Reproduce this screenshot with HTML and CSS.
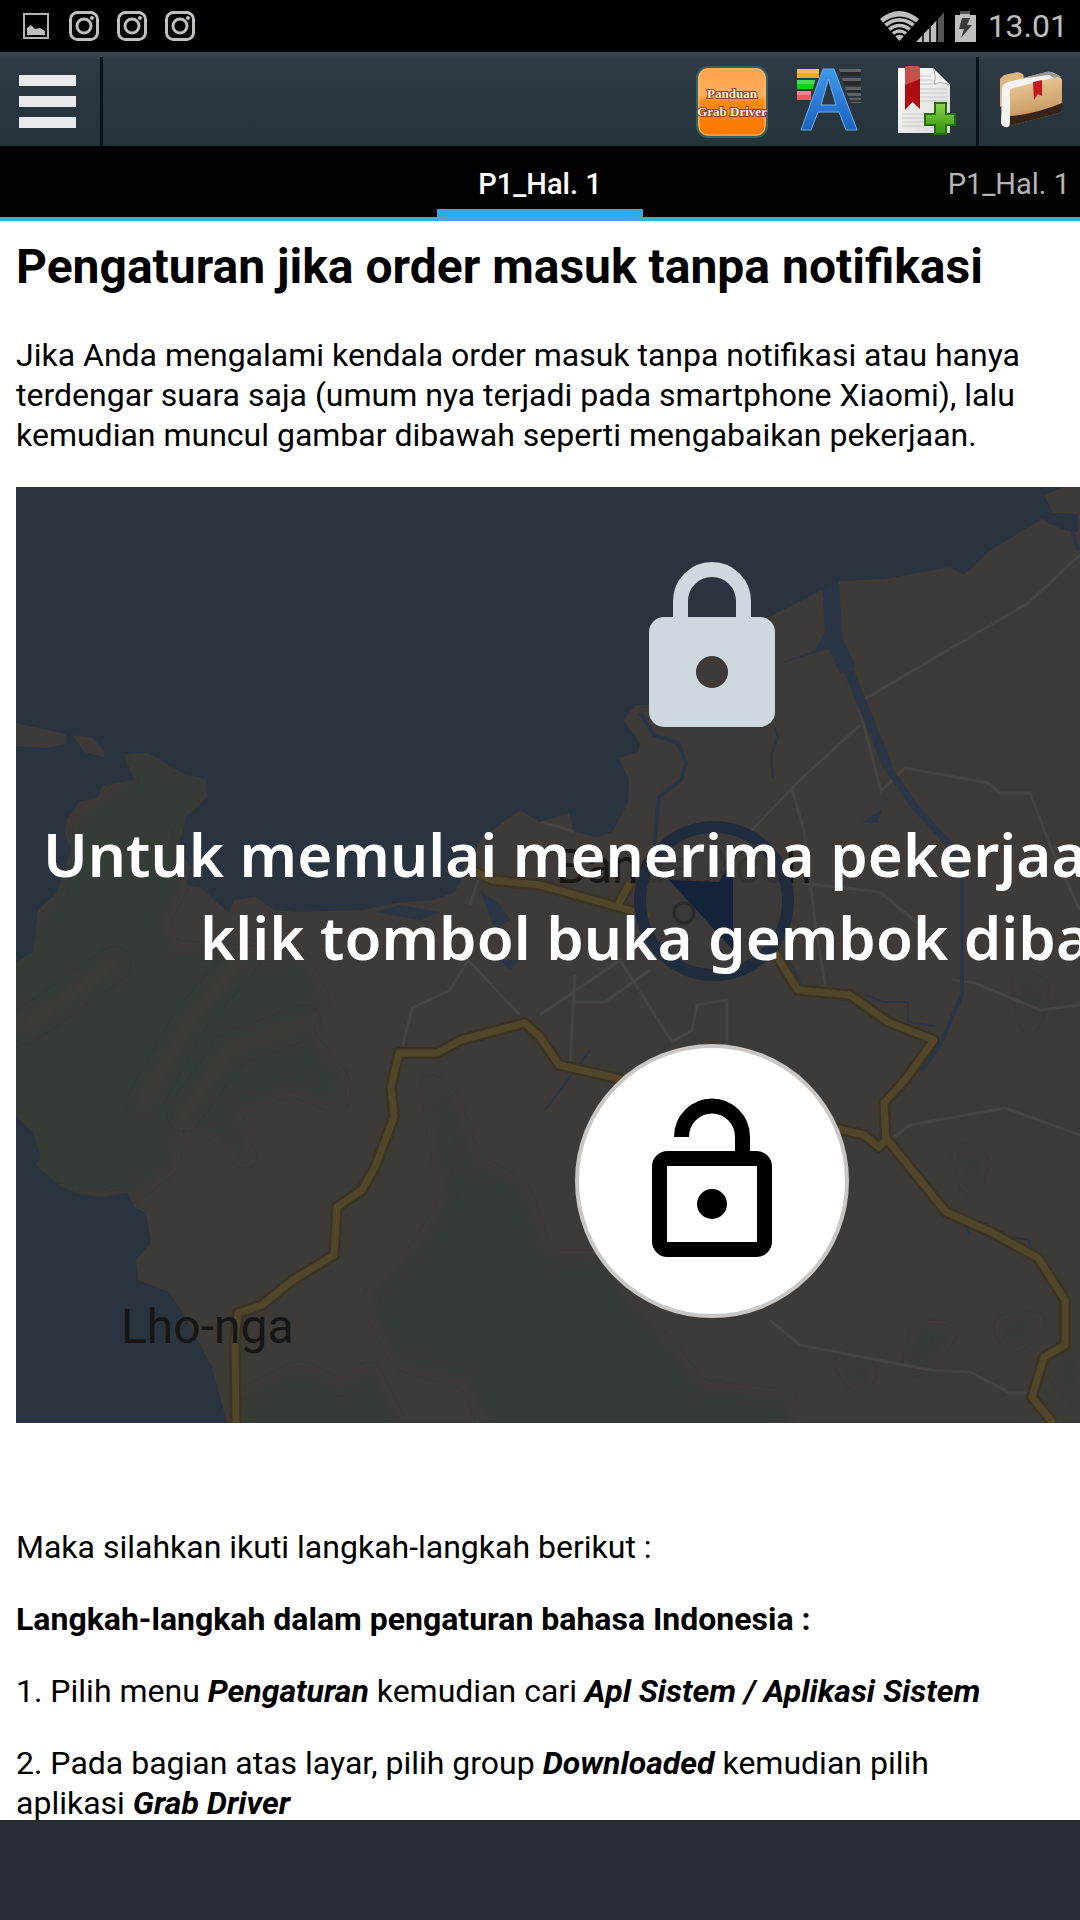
FILE: index.html
```html
<!DOCTYPE html>
<html lang="id">
<head>
<meta charset="utf-8">
<meta name="viewport" content="width=device-width, initial-scale=1">
<title>Panduan Grab Driver</title>
<link rel="stylesheet" href="styles.css">
</head>
<body>
<div class="app">
  <div class="status">
    <div class="status-left">
      <svg width="26" height="26" viewBox="0 0 26 26" aria-hidden="true"><rect x="1" y="1" width="24" height="24" fill="none" stroke="#b4b4b0" stroke-width="2"/><path d="M4 22V15L8 12L12 16L17 15L22 18V22Z" fill="#bebebe"/></svg>
      <svg class="insta" width="30" height="30" viewBox="0 0 30 30" aria-hidden="true"><use href="#insta"/></svg>
      <svg class="insta" width="30" height="30" viewBox="0 0 30 30" aria-hidden="true"><use href="#insta"/></svg>
      <svg class="insta" width="30" height="30" viewBox="0 0 30 30" aria-hidden="true">
        <g id="insta"><rect x="1.500" y="1.500" width="27" height="27" rx="7" fill="none" stroke="#c2c0bd" stroke-width="3"/><circle cx="15" cy="15" r="7" fill="none" stroke="#c2c0bd" stroke-width="3"/><circle cx="23" cy="7" r="2" fill="#c2c0bd"/></g>
      </svg>
    </div>
    <div class="status-right">
      <svg width="96" height="32" viewBox="0 0 96 32" aria-hidden="true">
        <path d="M0 9Q19 -7 39 9L19.500 31Z" fill="#bebebe"/>
        <path d="M3 13.500Q19.500 1 36 13.500M6.500 18Q19.500 7.500 32.500 18M10.500 22Q19.500 14.500 28.500 22M14 26Q19.500 21.500 25 26" fill="none" stroke="#000" stroke-width="1.700"/>
        <path d="M36 32L57 10V32Z" fill="#bebebe"/><path d="M58 9L64 2V32H58Z" fill="#555"/>
        <path d="M43 22V32M50 15V32M57 8V32" stroke="#000" stroke-width="1.500"/>
        <path d="M80 1H90V5H96V32H75V5H80Z" fill="#bebebe"/><path d="M80 1H90V4H80Z" fill="#555"/>
        <path d="M82 8H90L87 15H92L81 28L84 19H79Z" fill="#3a3a3a"/>
      </svg>
      <time>13.01</time>
    </div>
  </div>

  <header class="toolbar">
    <button class="tool tool-menu" type="button" aria-label="Menu"><span class="bar"></span><span class="bar"></span><span class="bar"></span></button>
    <div class="tools">
      <button class="tool" type="button" aria-label="Panduan Grab Driver">
        <svg width="72" height="72" viewBox="0 0 72 72">
          <defs><linearGradient id="og" x2="0" y2="1"><stop offset="0" stop-color="#ffa24c"/><stop offset=".4" stop-color="#ffad5c"/><stop offset=".5" stop-color="#ff8a10"/><stop offset="1" stop-color="#fb7600"/></linearGradient></defs>
          <rect x="1" y="1" width="70" height="70" rx="11" fill="url(#og)" stroke="#2f6468" stroke-width="2"/>
          <rect x="3" y="3" width="66" height="66" rx="9" fill="none" stroke="#ffb877"/>
          <g class="logo-text"><text x="36" y="32">Panduan</text><text x="36" y="50">Grab Driver</text></g>
        </svg>
      </button>
      <button class="tool" type="button" aria-label="Huruf dan warna">
        <svg width="72" height="72" viewBox="0 0 72 72">
          <defs><linearGradient id="bl" x2="0" y2="1"><stop offset="0" stop-color="#3f97ec"/><stop offset="1" stop-color="#1c60bd"/></linearGradient></defs>
          <path d="M4 3H26V12H4Z" fill="#f1a91f"/><path d="M4 14H22L20 23H4Z" fill="#0bd51d"/><path d="M4 25H18V34H4Z" fill="#f4575d"/>
          <path d="M4 3H26V7H4ZM4 14H22V18H4ZM4 25H18V29H4Z" fill="#fff" opacity=".25"/>
          <path d="M46 3H68V9H48ZM49 12H68V18H51ZM52 21H68V25H53ZM54 27H68V30H55ZM56 32H68V34H57ZM58 36H68V37H59Z" fill="#606366"/>
          <path d="M47 6H68V10H48ZM50 15H68V19H51ZM53 24H68V26H54Z" fill="#26292c"/>
          <path fill-rule="evenodd" d="M30 3H41L64 64H53L46 46H25L18 64H8ZM35.500 13L28 39H43Z" fill="url(#bl)" stroke="#69b2f2"/>
        </svg>
      </button>
      <button class="tool" type="button" aria-label="Tambah penanda">
        <svg width="72" height="72" viewBox="0 0 72 72">
          <defs><linearGradient id="pg" x2="1" y2="1"><stop offset="0" stop-color="#fff"/><stop offset="1" stop-color="#d8d8d6"/></linearGradient><linearGradient id="gr" x2="0" y2="1"><stop offset="0" stop-color="#8bd44c"/><stop offset="1" stop-color="#32900b"/></linearGradient></defs>
          <path d="M8 2H43L60 19V67H8Z" fill="url(#pg)"/>
          <path d="M30 10H41M30 14H42M30 18H46M30 23H57M30 27H57M30 31H57M30 35H57M12 48H38M12 52H36M12 56H36M12 60H38" stroke="#c6c6c6"/>
          <path d="M43 2L60 19Q51 15 44 18Q47 11 43 2Z" fill="#f4f4f4" stroke="#aaa"/>
          <path d="M15 2Q15 0 18 0H27Q30 0 30 2V43L22.500 36L15 44Z" fill="#ad0d12"/><path d="M15 2Q15 0 18 0H27Q30 0 30 2V13L15 19Z" fill="#c8504b"/>
          <path d="M45 37H56V48H65V59H56V68H45V59H35V48H45Z" fill="url(#gr)" stroke="#237006" stroke-width="2"/>
        </svg>
      </button>
    </div>
    <button class="tool tool-last" type="button" aria-label="Daftar penanda">
      <svg width="72" height="72" viewBox="0 0 72 72">
        <defs><linearGradient id="fo" x1="0" x2=".2" y2="1"><stop offset="0" stop-color="#f0cf9e"/><stop offset=".7" stop-color="#cfa26a"/><stop offset="1" stop-color="#a57b4b"/></linearGradient></defs>
        <path d="M9 13L13 9L27 6L32 8L33 12L18 54L9 44Z" fill="#dcb580"/><path d="M9 41L18 38V58L10 52Z" fill="#2c1c13"/>
        <path d="M11 22Q11 18 17 16L56 6Q61 5 70 11L20 25L19 58Q18 62 14 61Q10 60 10 56Z" fill="#f5f3ef"/>
        <path d="M28 13L55 6Q60 5 70 11L65 13L58 9Z" fill="#9a9894"/>
        <path d="M19 26Q19 23 22 22L66 11Q71 11 71 15V44Q71 46 68 47L22 59Q18 62 19 56Z" fill="url(#fo)"/>
        <path d="M19 50Q45 48 71 37V44Q71 46 68 47L22 59Q18 62 19 56Z" fill="#38251a"/>
        <path d="M42 16L51 14V30L47 28L43 34Z" fill="#c3191d"/>
      </svg>
    </button>
  </header>

  <nav class="tabs">
    <a class="tab tab-current" href="#hal1" aria-current="page">P1_Hal. 1</a>
    <a class="tab tab-next" href="#hal2">P1_Hal. 1</a>
  </nav>

  <main class="page" id="hal1">
    <h1>Pengaturan jika order masuk tanpa notifikasi</h1>
    <p>Jika Anda mengalami kendala order masuk tanpa notifikasi atau hanya terdengar suara saja (umum nya terjadi pada smartphone Xiaomi), lalu kemudian muncul gambar dibawah seperti mengabaikan pekerjaan.</p>
    <figure class="shot">
      <svg width="1392" height="936" viewBox="16 487 1392 936" role="img" aria-label="Tampilan peta terkunci dengan tombol buka gembok">
        <defs>
          <path id="land" d="M1408 487H1063L1044 495L1053 513L1078 514V532L1068 531L1060 525L1050 525L1043 518L988 552L964 575L950 567L884 579L839 581L822 590L769 617L649 705L636 705L623 720L640 743L638 752L619 758L629 780L628 803L612 832L597 837L574 832L569 813L540 822L520 810L482 838L465 865L461 880L455 892L434 900L396 903L362 910L296 912L275 910L255 897L234 900L229 913L200 887L186 885L191 867L178 850L186 817L207 797L206 780L182 773L148 753L124 754L134 780L103 785L98 797L79 802L67 820L65 833L71 850L57 893L38 910L33 953L16 962V1115L33 1132L41 1157L36 1165L62 1187L80 1194L103 1197L128 1193L134 1207L146 1213L151 1243L136 1260L138 1280L169 1292L183 1313L212 1367L227 1423H1408Z"/>
          <path id="road" d="M236 1423L235 1340L238 1313L262 1305L293 1280L334 1255L337 1207L362 1190L375 1167L394 1117L391 1087L399 1053H437L461 1040L525 1023L540 1037L559 1065L616 1078L843 1130L864 1135L879 1147L886 1140L884 1103L905 1080L934 1040L888 1022L850 995L798 990L784 968L770 945M472 870L492 880L540 885L650 916M617 907L630 883M886 1138L946 1212L991 1232L1038 1258L1065 1300V1345L1044 1357L1032 1397L1053 1423"/>
          <clipPath id="onland"><use href="#land"/></clipPath>
          <filter id="soft" x="-10%" y="-10%" width="120%" height="120%"><feGaussianBlur stdDeviation="6"/></filter>
        </defs>
        <rect x="16" y="487" width="1392" height="936" fill="#2a3440"/>
        <use href="#land" fill="#3d3a37"/>
        <path d="M16 723L66 734V744L45 748L16 746ZM73 735L92 738L104 750V757L84 752Z" fill="#3d3a38"/>
        <g clip-path="url(#onland)">
          <g filter="url(#soft)" fill="#363a34">
            <path d="M115 745L220 780L180 830L182 880L160 920L170 950L300 960L320 1000L300 1030L340 1080L340 1105L290 1085L230 1110L250 1165L215 1130L175 1115L170 1165L130 1195L30 1190L10 1100V960L60 900L65 830L134 780Z"/>
            <path d="M430 1080L450 1100L470 1160L520 1190L535 1230L545 1260L600 1260L630 1310L660 1340L700 1390L790 1400L780 1430H490L470 1380L400 1360L370 1300L420 1250L450 1200L440 1150Z"/>
            <path d="M240 1400L300 1370L340 1390L370 1370L400 1430H250ZM920 1330L950 1330L930 1360L910 1370ZM1000 1325L1040 1320L1015 1345ZM840 1360L870 1370L860 1385ZM960 1150L980 1160L970 1190ZM1020 980L1040 985L1030 1030ZM1055 1370L1080 1350V1400Z"/>
          </g>
          <g filter="url(#soft)" fill="none" stroke="#3d3b36" stroke-width="14"><path d="M250 950L190 1020L140 1110M310 1020L230 1050L180 1120M120 960L20 1030"/></g>
          <g fill="none" stroke="#464443" stroke-width="3">
            <path d="M1080 555L1028 603L858 703L881 791L905 768L988 783L1000 793H1030L1052 850L1080 910M860 725L800 780L750 832M792 790L804 830L816 930L826 990M802 883L880 892L920 925M540 1015L620 960L672 1042L692 1030L697 1005L727 1000V1045M575 975L570 1065M575 1002H605L650 970M470 905L478 880M403 1045L412 1008L450 990L468 960L520 1015M893 1138L910 1125L1005 1108L1080 1135M952 980L975 983L1040 1010L1080 1005M770 1320L800 1345L930 1370L970 1372L1010 1393H1028M540 822L560 827L575 832"/>
          </g>
          <g fill="none" stroke="#2a3645" stroke-linejoin="round">
            <path stroke-width="17" d="M830 575L834 640L848 670"/>
            <path stroke-width="10" d="M842 655L862 703L888 767"/>
            <path stroke-width="7" d="M886 765L915 807L950 845L959 865"/>
            <path stroke-width="4" d="M962 865V995L940 1045L922 1070M640 713L654 735L678 743L686 763L681 780L659 797L655 837V860M1043 518L1060 526L1072 530L1078 550"/>
            <path stroke-width="2" d="M775 727L778 738L771 755L773 778M898 1150L930 1195L960 1215L970 1235M1000 1235L1028 1240L1040 1265M590 1050L545 1110M785 955L803 985M865 995L885 1002H908V1022L935 1026"/>
          </g>
          <path d="M778 664L815 650L826 630L842 645ZM862 822L882 810L877 823ZM375 912L400 905L440 912L420 920ZM480 890L500 905L510 920L495 930ZM498 960L520 960L510 970Z" fill="#2a3645"/>
          <g fill="none" stroke-linejoin="round">
            <use href="#road" stroke="#3b3424" stroke-width="12"/>
            <use href="#road" stroke="#51452a" stroke-width="7"/>
          </g>
        </g>
        <g class="map-label"><text x="556" y="883">Banda Aceh</text><text x="121" y="1343">Lho-nga</text></g>
        <circle cx="714" cy="901" r="74" fill="#3c3b39" fill-opacity=".8" stroke="#202c3d" stroke-width="12"/>
        <circle cx="684" cy="913" r="10" fill="none" stroke="#2b2a29" stroke-width="3"/>
        <path d="M669 880L719 882L733 858V950Z" fill="#14233b"/>
        <path d="M680.500 620V601A31.500 31.500 0 0 1 743.500 601V620" fill="none" stroke="#cdd8df" stroke-width="15"/>
        <rect x="649" y="617" width="126" height="110" rx="15" fill="#cdd8df"/>
        <circle cx="712" cy="672" r="16" fill="#3d3a37"/>
        <g class="shot-text"><text x="43" y="877">Untuk memulai menerima pekerjaan,</text><text x="200" y="960">klik tombol buka gembok dibawah ini</text></g>
        <circle cx="712" cy="1181" r="135" fill="#fff" stroke="#c8c7c6" stroke-width="4"/>
        <path d="M681.500 1137A30.500 31 0 0 1 742.500 1137V1155" fill="none" stroke="#000" stroke-width="15"/>
        <rect x="659.500" y="1158.500" width="105" height="91" rx="8" fill="none" stroke="#000" stroke-width="15"/>
        <path d="M667 1166H757V1242H667Z" fill="#fff"/>
        <circle cx="712" cy="1204" r="15"/>
      </svg>
    </figure>
    <p>Maka silahkan ikuti langkah-langkah berikut :</p>
    <p><b>Langkah-langkah dalam pengaturan bahasa Indonesia :</b></p>
    <p>1. Pilih menu <b><i>Pengaturan</i></b> kemudian cari <b><i>Apl Sistem / Aplikasi Sistem</i></b></p>
    <p>2. Pada bagian atas layar, pilih group <b><i>Downloaded</i></b> kemudian pilih aplikasi <b><i>Grab Driver</i></b></p>
  </main>
  <footer class="bottom"></footer>
</div>
</body>
</html>
```
FILE: styles.css
```css
* { box-sizing: border-box; }

body {
  margin: 0;
  font-family: Roboto, sans-serif;
  color: #000;
  background: #fff;
}

.app {
  display: flex;
  flex-direction: column;
  height: 100vh;
  overflow: hidden;
}

.status {
  display: flex;
  flex: none;
  justify-content: space-between;
  align-items: center;
  height: 52px;
  padding: 0 12px 0 23px;
  background: #000;
  color: #bebebe;
}

.status-left { display: flex; align-items: center; gap: 18px; }
.status-left svg:first-child { margin-right: 2px; }
.status-right { display: flex; align-items: center; gap: 12px; }
.status-right time { font-size: 32px; line-height: 52px; }

.toolbar {
  display: flex;
  flex: none;
  justify-content: space-between;
  height: 94px;
  padding-top: 5px;
  background: linear-gradient(#3d4a54, #2e3a45 8px, #26343c 80px, #26343a);
}

.tool {
  display: flex;
  align-items: center;
  justify-content: center;
  width: 97px;
  padding: 0;
  border: 0;
  background: none;
}

.tool-menu {
  flex-direction: column;
  gap: 10px;
  width: 103px;
  padding-right: 5px;
  border-right: 3px solid #07131c;
}

.bar { width: 57px; height: 11px; background: #e9eaeb; }
.tools { display: flex; margin: 0 2px 0 auto; }
.tool-last { width: 104px; padding-right: 5px; border-left: 3px solid #07131c; }

.logo-text {
  font: bold 13px "Liberation Serif", serif;
  text-anchor: middle;
  fill: #fff3dc;
  stroke: #8e3a26;
  stroke-width: 2px;
  paint-order: stroke;
}

.tabs {
  display: grid;
  flex: none;
  grid-template-columns: 1fr auto 1fr;
  height: 75px;
  border-bottom: 4px solid #45a9d8;
  background: #020202;
}

.tab {
  font-size: 29px;
  line-height: 76px;
  color: #b4b4b4;
  text-decoration: none;
}

.tab-current {
  grid-column: 2;
  height: 71px;
  padding: 0 41px;
  border-bottom: 8px solid #33a9e0;
  font-weight: 500;
  color: #fff;
}

.tab-next { justify-self: end; padding-right: 10px; }

.page {
  flex: 1;
  min-height: 0;
  padding-top: 18px;
  overflow: hidden;
}

h1, p { margin: 0 40px 0 16px; }
h1 { margin-bottom: 40px; font-size: 48px; line-height: 56px; }
p { margin-bottom: 32px; font-size: 32px; line-height: 40px; }

.shot { margin: 0 0 104px 16px; overflow: hidden; }
.shot svg { display: block; }

.map-label { font-size: 48px; fill: #171614; }
.shot-text { font: 600 60px "Noto Sans", sans-serif; fill: #fff; }

.bottom { flex: none; height: 100px; background: #282c35; }
```
